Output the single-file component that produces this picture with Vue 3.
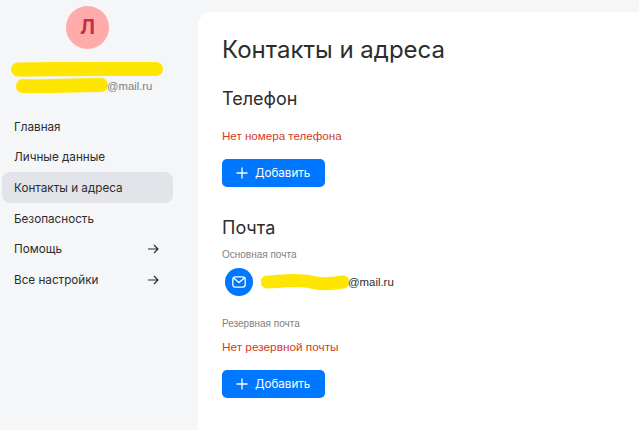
<script setup>
const nav = [
  { label: 'Главная' },
  { label: 'Личные данные' },
  { label: 'Контакты и адреса', active: true },
  { label: 'Безопасность' },
  { label: 'Помощь', arrow: true },
  { label: 'Все настройки', arrow: true }
]
</script>

<template>
  <div class="page">
    <aside class="side">
      <div class="avatar">Л</div>
      <svg class="name-mark" width="152" height="15" viewBox="0 0 152 15">
        <path d="M7 7.5 C50 6.5 100 7 145 7" fill="none" stroke="#ffe600" stroke-width="14" stroke-linecap="round" />
      </svg>
      <div class="side-mail">
        <svg width="92" height="15" viewBox="0 0 92 15">
          <path d="M7 8 C30 9 50 7 85 7" fill="none" stroke="#ffe600" stroke-width="14" stroke-linecap="round" />
        </svg>
        <span>@mail.ru</span>
      </div>
      <nav class="nav">
        <div v-for="item in nav" :key="item.label" class="nav-item" :class="{ active: item.active }">
          <span>{{ item.label }}</span>
          <svg v-if="item.arrow" width="12" height="10" viewBox="0 0 12 10">
            <path d="M1 5H11M7 1L11 5L7 9" fill="none" stroke="#2c2d2e" stroke-width="1.2" />
          </svg>
        </div>
      </nav>
    </aside>
    <main class="content">
      <h1>Контакты и адреса</h1>
      <h2 class="phone-title">Телефон</h2>
      <p class="empty first">Нет номера телефона</p>
      <button class="add">
        <svg width="12" height="12" viewBox="0 0 12 12">
          <path d="M6 0.5V11.5M0.5 6H11.5" stroke="#fff" stroke-width="1.3" />
        </svg>
        Добавить
      </button>
      <h2 class="mail-title">Почта</h2>
      <div class="label">Основная почта</div>
      <div class="mail-row">
        <div class="mail-icon">
          <svg width="14" height="12" viewBox="0 0 14 12">
            <rect x="0.8" y="0.8" width="12.4" height="10.4" rx="2.6" fill="none" stroke="#fff" stroke-width="1.3" />
            <path d="M1.6 2L7 6.6L12.4 2" fill="none" stroke="#fff" stroke-width="1.3" />
          </svg>
        </div>
        <svg width="88" height="18" viewBox="0 0 88 18">
          <path d="M6 9 C25 8 35 6 50 9 C60 12 70 11 82 9" fill="none" stroke="#ffe600" stroke-width="13" stroke-linecap="round" />
        </svg>
        <span class="row-mail">@mail.ru</span>
      </div>
      <div class="label second">Резервная почта</div>
      <p class="empty reserve">Нет резервной почты</p>
      <button class="add">
        <svg width="12" height="12" viewBox="0 0 12 12">
          <path d="M6 0.5V11.5M0.5 6H11.5" stroke="#fff" stroke-width="1.3" />
        </svg>
        Добавить
      </button>
    </main>
  </div>
</template>

<style>
html, body {
  margin: 0;
  background: #f5f6f8;
}
</style>

<style scoped>
.page {
  display: flex;
  width: 639px;
  height: 430px;
  overflow: hidden;
  background: #f5f6f8;
  font-family: "Liberation Sans", Arial, sans-serif;
  color: #2c2d2e;
}
.side {
  width: 198px;
  flex-shrink: 0;
  padding-top: 6px;
  box-sizing: border-box;
}
.avatar {
  width: 43px;
  height: 43px;
  margin-left: 66px;
  border-radius: 50%;
  background: #ffabab;
  color: #c42f4b;
  font: 700 20px/43px Inter, sans-serif;
  text-align: center;
}
.name-mark {
  display: block;
  margin: 13px 0 0 11px;
}
.side-mail {
  display: flex;
  align-items: center;
  margin: 1px 0 0 16px;
  font-size: 11.3px;
  color: #818181;
}
.side-mail svg {
  margin-right: -1px;
}
.nav {
  margin: 18px 0 0 2px;
  width: 171px;
}
.nav-item {
  display: flex;
  align-items: center;
  justify-content: space-between;
  height: 30.6px;
  box-sizing: border-box;
  padding: 1px 14px 0 12px;
  border-radius: 8px;
  font: 11.7px Inter, sans-serif;
}
.nav-item.active {
  background: #e3e4e9;
}
.content {
  flex: 1;
  margin-top: 12px;
  padding: 23px 0 0 24px;
  background: #fff;
  border-top-left-radius: 14px;
}
h1 {
  margin: 0;
  font: 400 24px/30px Inter, sans-serif;
  color: #2c2d2e;
}
h2 {
  margin: 0;
  font: 400 18px/24px Inter, sans-serif;
  color: #2c2d2e;
}
.phone-title {
  margin-top: 22px;
}
.empty {
  margin: 0;
  font-size: 11.6px;
  line-height: 16px;
  color: #d13b1d;
}
.empty.first {
  margin-top: 17px;
}
.empty.reserve {
  margin-top: 8px;
  font-size: 11.8px;
}
.add {
  display: flex;
  align-items: center;
  gap: 7px;
  height: 28px;
  width: 103px;
  margin-top: 15px;
  padding: 0 0 0 14px;
  border: 0;
  border-radius: 5px;
  background: #0077ff;
  color: #fff;
  font: 11.6px Inter, sans-serif;
}
.mail-title {
  margin-top: 29px;
}
.label {
  margin-top: 8px;
  font-size: 10px;
  line-height: 14px;
  color: #818181;
}
.label.second {
  margin-top: 21px;
}
.mail-row {
  display: flex;
  align-items: center;
  height: 28px;
  margin-top: 6px;
  font-size: 11.6px;
}
.row-mail {
  margin-left: -1px;
  font-size: 11.4px;
}
.mail-icon {
  display: flex;
  align-items: center;
  justify-content: center;
  width: 28px;
  height: 28px;
  margin: 0 8px 0 3px;
  border-radius: 50%;
  background: #0077ff;
}
</style>
